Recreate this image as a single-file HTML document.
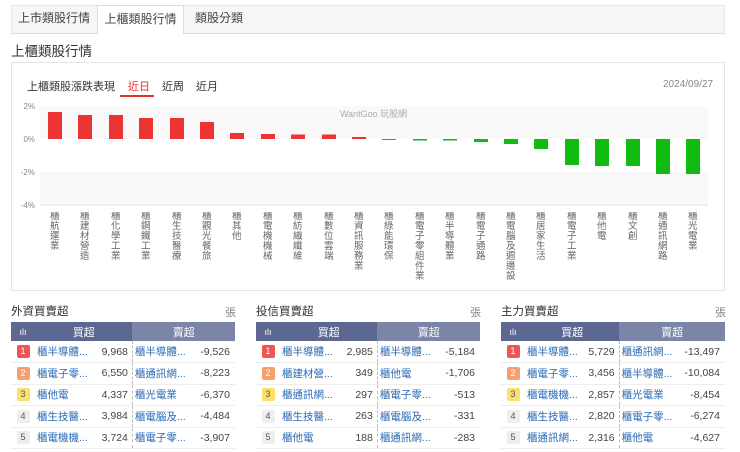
<!DOCTYPE html>
<html><head><meta charset="utf-8"><style>
*{margin:0;padding:0;box-sizing:border-box}
body{width:740px;height:452px;background:#fff;font-family:"Liberation Sans","Noto Sans CJK TC",sans-serif;color:#333;position:relative;overflow:hidden}
.abs{position:absolute}
.tabbar{left:11px;top:5px;width:714px;height:29px;background:#f6f6f7;border:1px solid #e8e8e8;border-bottom:1px solid #ddd}
.tab{position:absolute;top:5px;height:29px;line-height:27px;font-size:12px;text-align:center;color:#444}
.tab.act{background:#fff;border:1px solid #ddd;border-bottom:1px solid #fff;height:30px}
.title{left:11px;top:40px;font-size:13.5px;color:#333}
.box{left:11px;top:62px;width:714px;height:229px;border:1px solid #e6e6e6}
.sec{position:absolute;top:303px;font-size:11.5px;color:#333;font-weight:normal}
.unit{position:absolute;top:304px;font-size:11px;color:#888}
table{position:absolute;top:322px;width:224px;border-collapse:collapse;font-size:10.5px}
th{height:19px;color:#fff;font-weight:normal;font-size:11px}
th.a{background:#5d6892}th.b{background:#7b85a8}
td{height:21.5px;border-bottom:1px solid #eee}
td.n{width:24px;text-align:center}
.r{display:inline-block;width:13px;height:13px;line-height:13px;font-size:9px;text-align:center;border-radius:2px;background:#eee;color:#555}
.r1{background:#ee5656;color:#fff}.r2{background:#f5a06e;color:#fff}.r3{background:#fbe06a;color:#555}
td.l{color:#2a6ab5;padding-left:2px}
td.v{text-align:right;padding-right:4px;color:#444;border-right:1px dashed #bbb}
td.v2{text-align:right;padding-right:5px;color:#444}
.lb div{position:absolute;width:11px;overflow:hidden;max-height:70px}
</style></head><body>
<div class="abs tabbar"></div>
<div class="tab" style="left:11px;width:86px">上市類股行情</div>
<div class="tab act" style="left:97px;width:87px">上櫃類股行情</div>
<div class="tab" style="left:184px;width:70px">類股分類</div>
<div class="abs title">上櫃類股行情</div>
<div class="abs box"></div>
<div class="abs" style="left:27px;top:78px;font-size:11px;color:#333">上櫃類股漲跌表現</div>
<div class="abs" style="left:128px;top:78px;font-size:11px;color:#e03030">近日</div>
<div class="abs" style="left:120px;top:95px;width:34px;height:2px;background:#e03030"></div>
<div class="abs" style="left:162px;top:78px;font-size:11px;color:#333">近周</div>
<div class="abs" style="left:196px;top:78px;font-size:11px;color:#333">近月</div>
<div class="abs" style="left:663px;top:79px;font-size:10px;color:#888">2024/09/27</div>
<svg class="abs" style="left:0;top:0" width="740" height="300" font-family="Liberation Sans,Noto Sans CJK TC,sans-serif">
<rect x="40" y="106" width="668" height="33" fill="#f9f9f9"/>
<rect x="40" y="172" width="668" height="33" fill="#f9f9f9"/>
<line x1="40" y1="205" x2="708" y2="205" stroke="#e4e4e4"/>
<g font-size="8" fill="#888" text-anchor="end"><text x="35" y="109">2%</text><text x="35" y="142">0%</text><text x="35" y="175">-2%</text><text x="35" y="208">-4%</text></g>
<text x="340" y="117" font-size="9" fill="#aaa">WantGoo 玩股網</text>
<g fill="#ee3333">
<rect x="48" y="112" width="14" height="27"/><rect x="78" y="115" width="14" height="24"/><rect x="109" y="115" width="14" height="24"/><rect x="139" y="118" width="14" height="21"/><rect x="170" y="118" width="14" height="21"/><rect x="200" y="122" width="14" height="17"/><rect x="230" y="133" width="14" height="6"/><rect x="261" y="134" width="14" height="5"/><rect x="291" y="134.5" width="14" height="4.5"/><rect x="322" y="134.5" width="14" height="4.5"/><rect x="352" y="137" width="14" height="2"/></g>
<g fill="#11bb11">
<rect x="382" y="139" width="14" height="1"/><rect x="413" y="139" width="14" height="1.5"/><rect x="443" y="139" width="14" height="1.5"/><rect x="474" y="139" width="14" height="3"/><rect x="504" y="139" width="14" height="5"/><rect x="534" y="139" width="14" height="10"/><rect x="565" y="139" width="14" height="26"/><rect x="595" y="139" width="14" height="27"/><rect x="626" y="139" width="14" height="27"/><rect x="656" y="139" width="14" height="35"/><rect x="686" y="139" width="14" height="35"/></g>
</svg>
<div class="abs lb" style="left:0;top:212px;width:740px;font-size:9.5px;color:#666;line-height:10px">
<div style="left:50px">櫃航運業</div>
<div style="left:80px">櫃建材營造</div>
<div style="left:111px">櫃化學工業</div>
<div style="left:141px">櫃鋼鐵工業</div>
<div style="left:172px">櫃生技醫療</div>
<div style="left:202px">櫃觀光餐旅</div>
<div style="left:232px">櫃其他</div>
<div style="left:263px">櫃電機機械</div>
<div style="left:293px">櫃紡織纖維</div>
<div style="left:324px">櫃數位雲端</div>
<div style="left:354px">櫃資訊服務業</div>
<div style="left:384px">櫃綠能環保</div>
<div style="left:415px">櫃電子零組件業</div>
<div style="left:445px">櫃半導體業</div>
<div style="left:476px">櫃電子通路</div>
<div style="left:506px">櫃電腦及週邊設</div>
<div style="left:536px">櫃居家生活</div>
<div style="left:567px">櫃電子工業</div>
<div style="left:597px">櫃他電</div>
<div style="left:628px">櫃文創</div>
<div style="left:658px">櫃通訊網路</div>
<div style="left:688px">櫃光電業</div>
</div>

<div class="sec" style="left:11px">外資買賣超</div><div class="unit" style="left:225px">張</div>
<table style="left:11px"><tr><th class="a" style="width:24px;font-size:9px">ılı</th><th class="a" colspan="2">買超</th><th class="b" colspan="2">賣超</th></tr>
<tr><td class="n"><span class="r r1">1</span></td><td class="l">櫃半導體...</td><td class="v">9,968</td><td class="l">櫃半導體...</td><td class="v2">-9,526</td></tr>
<tr><td class="n"><span class="r r2">2</span></td><td class="l">櫃電子零...</td><td class="v">6,550</td><td class="l">櫃通訊網...</td><td class="v2">-8,223</td></tr>
<tr><td class="n"><span class="r r3">3</span></td><td class="l">櫃他電</td><td class="v">4,337</td><td class="l">櫃光電業</td><td class="v2">-6,370</td></tr>
<tr><td class="n"><span class="r">4</span></td><td class="l">櫃生技醫...</td><td class="v">3,984</td><td class="l">櫃電腦及...</td><td class="v2">-4,484</td></tr>
<tr><td class="n"><span class="r">5</span></td><td class="l">櫃電機機...</td><td class="v">3,724</td><td class="l">櫃電子零...</td><td class="v2">-3,907</td></tr></table>

<div class="sec" style="left:256px">投信買賣超</div><div class="unit" style="left:470px">張</div>
<table style="left:256px"><tr><th class="a" style="width:24px;font-size:9px">ılı</th><th class="a" colspan="2">買超</th><th class="b" colspan="2">賣超</th></tr>
<tr><td class="n"><span class="r r1">1</span></td><td class="l">櫃半導體...</td><td class="v">2,985</td><td class="l">櫃半導體...</td><td class="v2">-5,184</td></tr>
<tr><td class="n"><span class="r r2">2</span></td><td class="l">櫃建材營...</td><td class="v">349</td><td class="l">櫃他電</td><td class="v2">-1,706</td></tr>
<tr><td class="n"><span class="r r3">3</span></td><td class="l">櫃通訊網...</td><td class="v">297</td><td class="l">櫃電子零...</td><td class="v2">-513</td></tr>
<tr><td class="n"><span class="r">4</span></td><td class="l">櫃生技醫...</td><td class="v">263</td><td class="l">櫃電腦及...</td><td class="v2">-331</td></tr>
<tr><td class="n"><span class="r">5</span></td><td class="l">櫃他電</td><td class="v">188</td><td class="l">櫃通訊網...</td><td class="v2">-283</td></tr></table>

<div class="sec" style="left:501px">主力買賣超</div><div class="unit" style="left:715px">張</div>
<table style="left:501px"><tr><th class="a" style="width:24px;font-size:9px">ılı</th><th class="a" colspan="2">買超</th><th class="b" colspan="2">賣超</th></tr>
<tr><td class="n"><span class="r r1">1</span></td><td class="l">櫃半導體...</td><td class="v">5,729</td><td class="l">櫃通訊網...</td><td class="v2">-13,497</td></tr>
<tr><td class="n"><span class="r r2">2</span></td><td class="l">櫃電子零...</td><td class="v">3,456</td><td class="l">櫃半導體...</td><td class="v2">-10,084</td></tr>
<tr><td class="n"><span class="r r3">3</span></td><td class="l">櫃電機機...</td><td class="v">2,857</td><td class="l">櫃光電業</td><td class="v2">-8,454</td></tr>
<tr><td class="n"><span class="r">4</span></td><td class="l">櫃生技醫...</td><td class="v">2,820</td><td class="l">櫃電子零...</td><td class="v2">-6,274</td></tr>
<tr><td class="n"><span class="r">5</span></td><td class="l">櫃通訊網...</td><td class="v">2,316</td><td class="l">櫃他電</td><td class="v2">-4,627</td></tr></table>
</body></html>
